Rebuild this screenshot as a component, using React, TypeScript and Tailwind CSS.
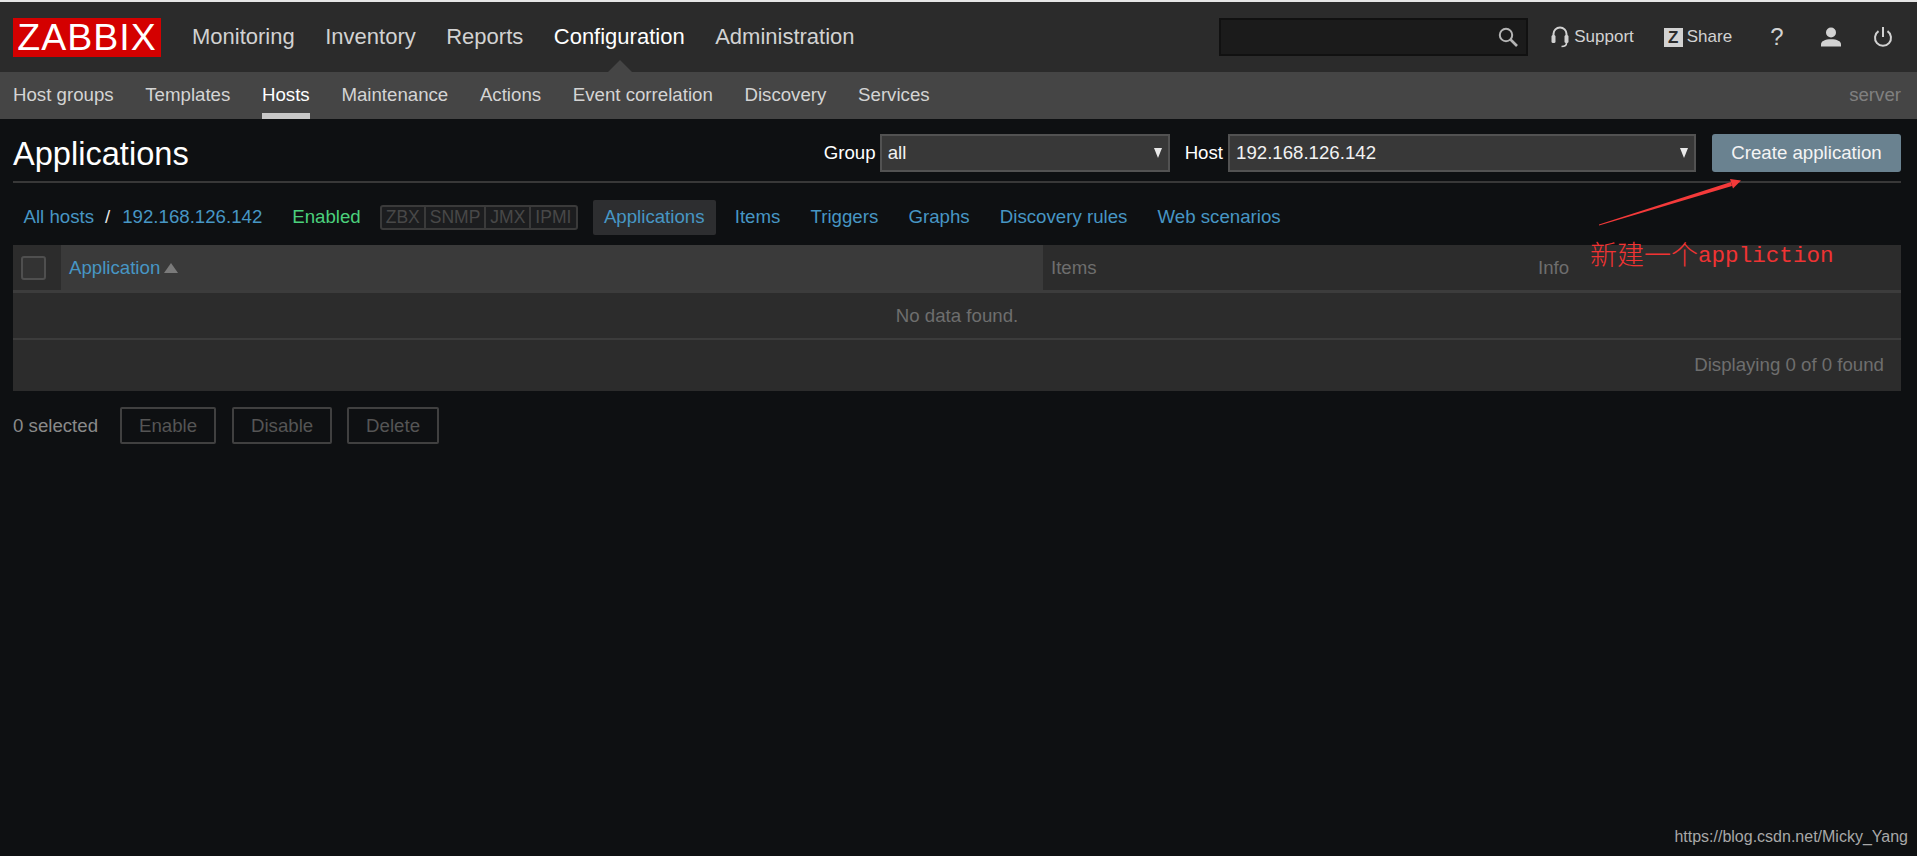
import React from 'react';

const mainNav = ['Monitoring', 'Inventory', 'Reports', 'Configuration', 'Administration'];
const subNav = ['Host groups', 'Templates', 'Hosts', 'Maintenance', 'Actions', 'Event correlation', 'Discovery', 'Services'];
const hostTabs = ['Items', 'Triggers', 'Graphs', 'Discovery rules', 'Web scenarios'];
const statusTags = ['ZBX', 'SNMP', 'JMX', 'IPMI'];

const HeadsetIcon: React.FC = () => (
  <svg width="18" height="24" viewBox="0 0 18 24" fill="none">
    <path d="M2.5 13V9a6.5 6.5 0 0 1 13 0V13" stroke="#d2d2d2" strokeWidth="2" />
    <rect x="0.5" y="10" width="4" height="8" rx="1.5" fill="#d2d2d2" />
    <rect x="13.5" y="10" width="4" height="8" rx="1.5" fill="#d2d2d2" />
    <path d="M15.5 18c0 2.5-2 3.5-5 3.5" stroke="#d2d2d2" strokeWidth="1.6" />
  </svg>
);

const SearchIcon: React.FC = () => (
  <svg width="22" height="22" viewBox="0 0 22 22" fill="none">
    <circle cx="9" cy="9" r="6.2" stroke="#b4b4b4" strokeWidth="2" />
    <path d="M13.5 13.5L20 20" stroke="#b4b4b4" strokeWidth="2.6" />
  </svg>
);

const UserIcon: React.FC = () => (
  <svg width="22" height="20" viewBox="0 0 22 20" fill="#d2d2d2">
    <circle cx="11" cy="5.5" r="5" />
    <path d="M1 19.5v-2.2c0-3 4-5 10-5s10 2 10 5v2.2z" />
  </svg>
);

const PowerIcon: React.FC = () => (
  <svg width="20" height="22" viewBox="0 0 20 22" fill="none" stroke="#d2d2d2" strokeWidth="2">
    <path d="M10 1v10" />
    <path d="M5.5 5.2a8 8 0 1 0 9 0" />
  </svg>
);

const Select: React.FC<{ value: string; width: string }> = ({ value, width }) => (
  <div className={`flex h-[38px] items-center justify-between border-2 border-[#525252] bg-[#383838] pl-[6px] pr-[6px] text-[#f2f2f2] ${width}`}>
    <span>{value}</span>
    <span className="h-0 w-0 border-x-[4px] border-t-[10px] border-x-transparent border-t-[#e8e8e8]" />
  </div>
);

const App: React.FC = () => {
  return (
    <div className="relative h-[856px] overflow-hidden bg-[#0e1012] font-['Liberation_Sans',Arial,sans-serif] text-[18.67px] text-[#dcdcdc]">
      <div className="h-[2px] bg-[#e6e6e6]" />

      <header className="relative flex h-[70px] items-center bg-[#2b2b2b] pl-[13px] pr-[24.5px]">
        <div className="mt-[1px] flex h-[39px] w-[148px] items-center justify-center bg-[#d40000] text-[37.5px] leading-none tracking-[1px] text-white">ZABBIX</div>
        <nav className="ml-[31px] flex gap-[30.5px] pb-[2px] text-[22px] text-[#d2d2d2]">
          {mainNav.map((item) => (
            <span key={item} className={item === 'Configuration' ? 'text-white' : ''}>{item}</span>
          ))}
        </nav>
        <span className="absolute bottom-0 left-[608px] h-0 w-0 border-x-[12px] border-b-[12px] border-x-transparent border-b-[#454545]" />

        <div className="ml-auto flex items-center text-[17px] text-[#d2d2d2]">
          <div className="flex h-[38px] w-[309px] items-center justify-end border-2 border-[#111111] bg-[#1b1b1b] pr-[7px]">
            <SearchIcon />
          </div>
          <div className="ml-[23px] flex items-center gap-[5px]">
            <HeadsetIcon />
            <span>Support</span>
          </div>
          <div className="ml-[30px] flex items-center gap-[4px]">
            <span className="flex h-[19px] w-[19px] items-center justify-center bg-[#d2d2d2] text-[17px] font-bold leading-none text-[#2b2b2b]">Z</span>
            <span>Share</span>
          </div>
          <span className="ml-[38px] text-[24px] leading-none">?</span>
          <span className="ml-[36px] flex"><UserIcon /></span>
          <span className="ml-[31px] flex"><PowerIcon /></span>
        </div>
      </header>

      <div className="flex h-[47px] items-center justify-between bg-[#454545] pl-[13px] pr-[16px] text-[#d4d4d4]">
        <nav className="flex h-full gap-[31.7px]">
          {subNav.map((item) => (
            <span
              key={item}
              className={item === 'Hosts'
                ? 'flex items-center border-b-[6px] border-[#c8c8c8] pt-[4px] text-white'
                : 'flex items-center pb-[2px]'}
            >
              {item}
            </span>
          ))}
        </nav>
        <span className="pb-[2px] text-[#808080]">server</span>
      </div>

      <main className="px-[13px] pr-[16px]">
        <div className="flex h-[64px] items-center justify-between border-b-2 border-[#383838] pt-[6px]">
          <h1 className="mt-[2px] text-[32.6px] font-normal leading-none text-white">Applications</h1>
          <div className="flex items-center text-white">
            <span className="mr-[4px]">Group</span>
            <Select value="all" width="w-[290px]" />
            <span className="ml-[15px] mr-[5px]">Host</span>
            <Select value="192.168.126.142" width="w-[468px]" />
            <button className="ml-[16px] h-[38px] w-[189px] rounded-[3px] bg-[#6a8290] text-[#f4f4f4]">Create application</button>
          </div>
        </div>

        <div className="flex h-[62px] items-center pl-[10.5px] pt-[6px] text-[#4796c4]">
          <span>All hosts</span>
          <span className="ml-[11px] text-[#e8e8e8]">/</span>
          <span className="ml-[12px]">192.168.126.142</span>
          <span className="ml-[30px] text-[#4bd07c]">Enabled</span>
          <div className="ml-[19px] flex h-[25px] w-[198px] rounded-[3px] border-2 border-[#3a3a3a] bg-[#1c1d1f] text-[17.5px] text-[#484848]">
            {statusTags.map((tag, i) => (
              <span key={tag} className={`flex items-center px-[4px] pt-[2px] leading-none ${i > 0 ? 'border-l-2 border-[#3a3a3a]' : ''}`}>{tag}</span>
            ))}
          </div>
          <span className="ml-[15px] flex h-[35px] w-[123px] items-center justify-center rounded-[2px] bg-[#2d2e30]">Applications</span>
          <div className="ml-[19px] flex gap-[30.2px]">
            {hostTabs.map((tab) => (
              <span key={tab}>{tab}</span>
            ))}
          </div>
        </div>

        <div className="bg-[#2c2c2c] text-[#6e6e6e]">
          <div className="flex h-[48px] border-b-[3px] border-[#3c3c3c]">
            <div className="flex w-[48px] items-center pl-[8px]">
              <span className="h-[24px] w-[25px] rounded-[3px] border-2 border-[#4f4f4f] bg-[#333333]" />
            </div>
            <div className="flex w-[982px] items-center gap-[4px] bg-[#3a3a3a] pl-[8px] text-[#4796c4]">
              Application
              <span className="h-0 w-0 border-x-[7px] border-b-[10px] border-x-transparent border-b-[#7a7a7a]" />
            </div>
            <div className="flex w-[495px] items-center pl-[8px]">Items</div>
            <div className="flex items-center">Info</div>
          </div>
          <div className="flex h-[47px] items-center justify-center border-b-2 border-[#3c3c3c]">No data found.</div>
          <div className="flex h-[51px] items-center justify-end pb-[2px] pr-[17px]">Displaying 0 of 0 found</div>
        </div>

        <div className="mt-[16px] flex items-center text-[#8a8a8a]">
          <span>0 selected</span>
          <div className="ml-[22px] flex gap-[15px] text-[#555555]">
            <span className="flex h-[37px] w-[96px] items-center justify-center rounded-[2px] border-2 border-[#404040]">Enable</span>
            <span className="ml-[1px] flex h-[37px] w-[100px] items-center justify-center rounded-[2px] border-2 border-[#404040]">Disable</span>
            <span className="flex h-[37px] w-[92px] items-center justify-center rounded-[2px] border-2 border-[#404040]">Delete</span>
          </div>
        </div>
      </main>

      {/* red annotation pasted on top of the screenshot */}
      <svg className="absolute left-[1590px] top-[170px]" width="160" height="60" viewBox="0 0 160 60" fill="#f43a3a">
        <path d="M9 55.5L9 54.5L141 12L142 16Z" />
        <path d="M140 9L151 10.5L143 18.5Z" />
      </svg>
      <div className="absolute left-[1590px] top-[236px] flex items-baseline whitespace-nowrap text-[#f03333]">
        <span className="font-['Noto_Sans_CJK_SC',sans-serif] text-[27px] font-light leading-[36px]">新建一个</span>
        <span className="-translate-y-[3px] font-['Liberation_Mono',monospace] text-[22.6px] leading-[36px]">appliction</span>
      </div>
      <div className="absolute right-[9px] top-[827px] text-[16px] leading-[20px] text-[#a8a8a8]">https://blog.csdn.net/Micky_Yang</div>
    </div>
  );
};

export default App;
